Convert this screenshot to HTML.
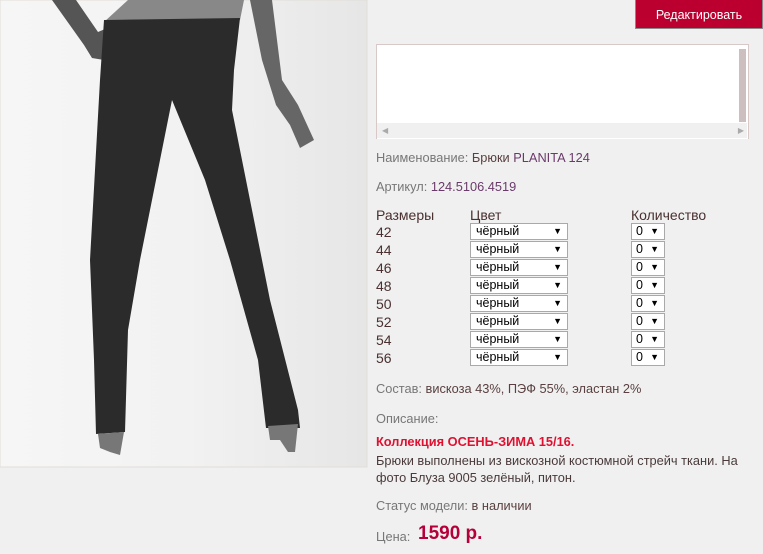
<!DOCTYPE html>
<html><head><meta charset="utf-8"><style>
body{margin:0;width:763px;height:554px;background:#f0f0f0;font-family:"Liberation Sans",sans-serif;position:relative;overflow:hidden}
.a{position:absolute;white-space:nowrap}
.l{color:#777;font-size:12.8px}
.v{color:#5a4040}
.sel{position:absolute;height:15px;background:#fff;border:1px solid #a9a9a9;font-size:12.5px;line-height:15px;color:#000;box-sizing:content-box}
.sel span{position:absolute;right:5px;top:0;font-size:9px}
.t{color:#333;font-size:14px}
</style></head><body>
<svg class="a" style="left:0;top:0" width="368" height="468" viewBox="0 0 368 468">
<defs><linearGradient id="bg" x1="0" x2="1"><stop offset="0" stop-color="#f6f6f6"/><stop offset="0.5" stop-color="#f2f2f2"/><stop offset="1" stop-color="#e6e6e6"/></linearGradient></defs>
<rect x="0" y="0" width="367" height="467" fill="url(#bg)" stroke="#e2ddd8"/>
<path d="M52 0 L76 0 L98 32 L112 26 L124 28 L115 50 L104 60 L92 58 L84 45 Z" fill="#555"/>
<path d="M250 0 L272 0 L282 80 L298 105 L314 140 L300 148 L290 125 L276 105 L262 60 Z" fill="#666"/>
<path d="M128 0 L244 0 L240 20 L104 22 Z" fill="#888"/>
<path d="M104 20 L240 18 L234 70 L232 110 L250 200 L270 300 L298 410 L300 428 L266 428 L258 360 L230 260 L205 180 L172 100 L160 160 L140 260 L128 330 L125 432 L96 434 L94 360 L90 260 L95 170 L100 80 Z" fill="#2b2b2b"/>
<path d="M98 434 L124 432 L120 455 L110 452 L100 448 Z" fill="#777"/>
<path d="M268 426 L298 424 L295 452 L288 452 L280 440 L270 440 Z" fill="#777"/>
</svg>
<div class="a" style="left:635px;top:0;width:126px;height:28px;background:#bb0030;border:1px solid #8a8a8a;border-top:none;color:#fff;font-size:12.5px;line-height:30px;text-align:center">Редактировать</div>
<div class="a" style="left:376px;top:44px;width:371px;height:94px;border:1px solid #d8c8c8;border-bottom:none;background:#fff"></div>
<div class="a" style="left:739px;top:49px;width:7px;height:73px;background:#cdbfbf"></div>
<div class="a" style="left:377px;top:123px;width:370px;height:15px;background:#f0f0f0;color:#aaa;font-size:8px;line-height:15px"><span style="margin-left:5px">◀</span><span style="position:absolute;right:3px">▶</span></div>
<div class="a l" style="left:376px;top:150px">Наименование: <span class="v">Брюки </span><span style="color:#6a3a6a">PLANITA 124</span></div>
<div class="a l" style="left:376px;top:179px">Артикул: <span style="color:#6a3a6a">124.5106.4519</span></div>
<div class="a t" style="left:376px;top:207px;color:#4a3030">Размеры</div>
<div class="a t" style="left:470px;top:207px;color:#4a3030">Цвет</div>
<div class="a t" style="left:631px;top:207px;color:#4a3030">Количество</div>
<div class="a t" style="left:376px;top:224px;color:#4a3030">42</div>
<div class="a t" style="left:376px;top:242px;color:#4a3030">44</div>
<div class="a t" style="left:376px;top:260px;color:#4a3030">46</div>
<div class="a t" style="left:376px;top:278px;color:#4a3030">48</div>
<div class="a t" style="left:376px;top:296px;color:#4a3030">50</div>
<div class="a t" style="left:376px;top:314px;color:#4a3030">52</div>
<div class="a t" style="left:376px;top:332px;color:#4a3030">54</div>
<div class="a t" style="left:376px;top:350px;color:#4a3030">56</div>
<div id="sels"></div>
<script>
var h='';for(var i=0;i<8;i++){var y=223+i*18;h+='<div class="sel" style="left:470px;top:'+y+'px;width:91px;padding-left:5px">чёрный<span>▼</span></div><div class="sel" style="left:631px;top:'+y+'px;width:28px;padding-left:4px">0<span>▼</span></div>';}
document.getElementById('sels').innerHTML=h;
</script>
<div class="a l" style="left:376px;top:381px">Состав: <span class="v">вискоза 43%, ПЭФ 55%, эластан 2%</span></div>
<div class="a l" style="left:376px;top:411px">Описание:</div>
<div class="a" style="left:376px;top:434px;color:#e01030;font-size:12.8px;font-weight:bold">Коллекция ОСЕНЬ-ЗИМА 15/16.</div>
<div class="a" style="left:376px;top:452px;color:#4a3a3a;font-size:12.8px;line-height:17px;white-space:normal;width:385px">Брюки выполнены из вискозной костюмной стрейч ткани. На фото Блуза 9005 зелёный, питон.</div>
<div class="a l" style="left:376px;top:498px">Статус модели: <span class="v">в наличии</span></div>
<div class="a l" style="left:376px;top:529px">Цена:</div>
<div class="a" style="left:418px;top:523px;color:#b5003a;font-size:19px;font-weight:bold">1590 р.</div>
</body></html>
